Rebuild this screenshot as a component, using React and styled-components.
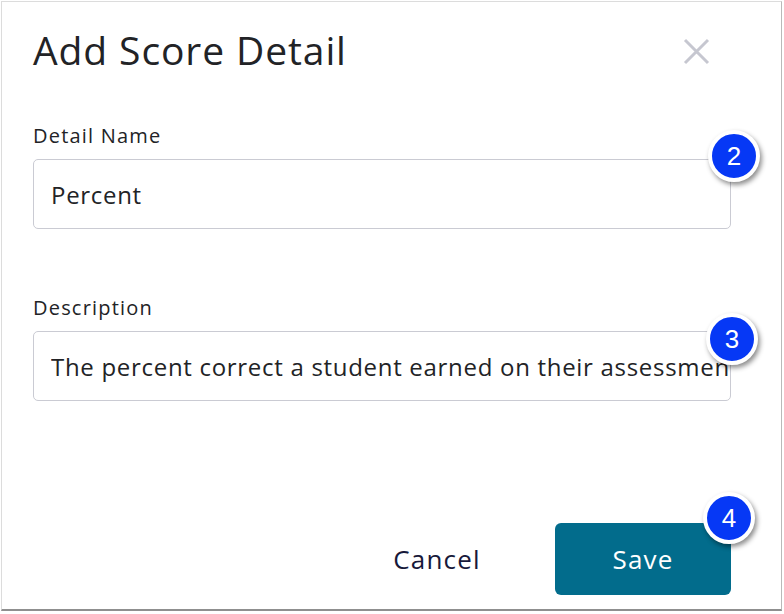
import styled, { createGlobalStyle } from "styled-components";

const GlobalStyle = createGlobalStyle`
    html, body {
        margin: 0;
        background: #ffffff;
    }
    body {
        font-family: "Open Sans", "Liberation Sans", sans-serif;
    }
`

const Badge = ({ n, top, right }) => (
    <BadgeDot style={{ top, right }}>{n}</BadgeDot>
)

const CloseIcon = () => (
    <svg width="27" height="27" viewBox="0 0 27 27">
        <path d="M2 2 L25 25 M25 2 L2 25" stroke="#c6c7d0" strokeWidth="3" />
    </svg>
)

const App = () => {
    return (
        <>
            <GlobalStyle />
            <Panel>
                <Header>
                    <Title>Add Score Detail</Title>
                    <CloseButton><CloseIcon /></CloseButton>
                </Header>

                <Field>
                    <Label>Detail Name</Label>
                    <InputWrap>
                        <Input readOnly value="Percent" />
                        <Badge n="2" top="-29px" right="-29px" />
                    </InputWrap>
                </Field>

                <Field $gap="65px">
                    <Label>Description</Label>
                    <InputWrap>
                        <Input readOnly value="The percent correct a student earned on their assessment" />
                        <Badge n="3" top="-18px" right="-27px" />
                    </InputWrap>
                </Field>

                <Footer>
                    <CancelButton>Cancel</CancelButton>
                    <ButtonWrap>
                        <SaveButton>Save</SaveButton>
                        <Badge n="4" top="-31px" right="-24px" />
                    </ButtonWrap>
                </Footer>
            </Panel>
        </>
    );
}

const Panel = styled.div`
    box-sizing: border-box;
    margin: 1px 0 0 1px;
    width: 781px;
    height: 610px;
    border: 1px solid #dcdcdc;
    border-bottom: 2px solid #8f8f8f;
    border-right: 1px solid #b9b9b9;
    padding: 0 50px 0 31px;
    display: flex;
    flex-direction: column;
    background: #fff;
`

const Header = styled.div`
    display: flex;
    align-items: center;
    justify-content: space-between;
    height: 98px;
    padding-bottom: 3px;
    box-sizing: border-box;
`

const Title = styled.h1`
    margin: 0;
    font-weight: 400;
    font-size: 39px;
    color: #222326;
    letter-spacing: 0.9px;
`

const CloseButton = styled.div`
    display: flex;
    margin: 3px 21px 0 0;
`

const Field = styled.div`
    display: flex;
    flex-direction: column;
    margin-top: ${p => p.$gap || "22px"};
`

const Label = styled.label`
    font-size: 20px;
    color: #222326;
    line-height: 28px;
    margin-bottom: 9px;
    letter-spacing: 1.2px;
`

const InputWrap = styled.div`
    position: relative;
`

const Input = styled.input`
    box-sizing: border-box;
    width: 100%;
    height: 70px;
    border: 1.5px solid #cacbd3;
    border-radius: 5px;
    padding: 0 1px 0 17px;
    font-family: "Open Sans", "Liberation Sans", sans-serif;
    font-size: 24px;
    letter-spacing: 0.7px;
    color: #222326;
    outline: none;
    background: #fff;
`

const BadgeDot = styled.div`
    position: absolute;
    width: 44px;
    height: 44px;
    border-radius: 50%;
    background: #0638f5;
    border: 4px solid #fff;
    box-shadow: 2px 3px 5px rgba(0, 0, 0, 0.45);
    color: #fff;
    font-family: "Liberation Sans", sans-serif;
    font-size: 26px;
    display: flex;
    align-items: center;
    justify-content: center;
`

const Footer = styled.div`
    margin-top: auto;
    margin-bottom: 14px;
    display: flex;
    justify-content: flex-end;
    align-items: center;
    gap: 30px;
`

const CancelButton = styled.div`
    width: 176px;
    text-align: center;
    font-size: 26px;
    letter-spacing: 1.2px;
    color: #17193a;
`

const ButtonWrap = styled.div`
    position: relative;
`

const SaveButton = styled.div`
    width: 176px;
    height: 72px;
    border-radius: 6px;
    background: #026c8c;
    color: #fff;
    font-size: 26px;
    letter-spacing: 1.2px;
    display: flex;
    align-items: center;
    justify-content: center;
`

export default App;
